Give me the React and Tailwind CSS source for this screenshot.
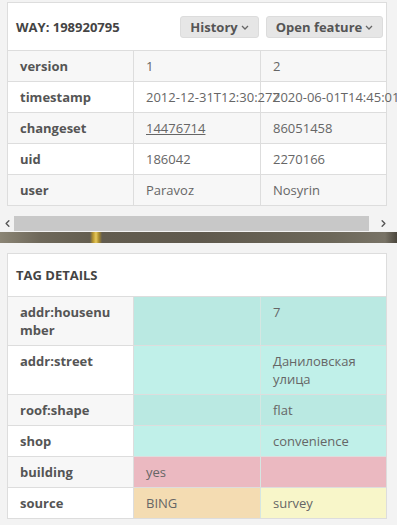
import { ChevronLeft, ChevronRight } from "lucide-react";

const history = [
  { key: "version", a: "1", b: "2" },
  { key: "timestamp", a: "2012-12-31T12:30:27Z", b: "2020-06-01T14:45:01Z" },
  { key: "changeset", a: "14476714", b: "86051458", link: true },
  { key: "uid", a: "186042", b: "2270166" },
  { key: "user", a: "Paravoz", b: "Nosyrin" },
];

const tags = [
  { key: "addr:housenumber", a: "", b: "7", ca: "bg-[#bae9e2]", cb: "bg-[#bae9e2]" },
  { key: "addr:street", a: "", b: "Даниловская улица", ca: "bg-[#c0f0e9]", cb: "bg-[#c0f0e9]" },
  { key: "roof:shape", a: "", b: "flat", ca: "bg-[#bae9e2]", cb: "bg-[#bae9e2]" },
  { key: "shop", a: "", b: "convenience", ca: "bg-[#c0f0e9]", cb: "bg-[#c0f0e9]" },
  { key: "building", a: "yes", b: "", ca: "bg-[#ebb9c1]", cb: "bg-[#ebb9c1]" },
  { key: "source", a: "BING", b: "survey", ca: "bg-[#f4dcb2]", cb: "bg-[#f8f6c9]" },
];

function Caret() {
  return (
    <svg width="8" height="5" viewBox="0 0 8 5" className="ml-[3px] mt-[2px]">
      <polyline points="1,1 4,4 7,1" fill="none" stroke="#666" strokeWidth="1.3" />
    </svg>
  );
}

function DropButton({ label, width }) {
  return (
    <div
      className={`${width} h-[22px] flex items-center justify-center rounded-[3px] bg-[#e6e6e6] border border-[#dcdcdc] text-[13px] font-bold text-[#555]`}
    >
      {label}
      <Caret />
    </div>
  );
}

export default function App() {
  return (
    <div className="w-[397px] h-[525px] overflow-hidden bg-[#f3f3f3] font-['Open_Sans',sans-serif] text-[13px] leading-[18px]">
      {/* feature history, scrolls sideways */}
      <div className="h-[216px] pt-[2px] pl-[7px] overflow-hidden">
        <div className="w-[380px] border border-[#ddd] bg-white">
          <div className="h-[47px] flex items-center pl-[8px] pr-[3px]">
            <span className="font-bold text-[#444]">WAY: 198920795</span>
            <div className="ml-auto flex gap-[7px]">
              <DropButton label="History" width="w-[79px]" />
              <DropButton label="Open feature" width="w-[117px]" />
            </div>
          </div>
          {history.map((r, i) => (
            <div
              key={r.key}
              className={`flex h-[31px] border-t border-[#ddd] ${i % 2 === 0 ? "bg-[#f7f7f7]" : "bg-white"}`}
            >
              <div className="w-[126px] shrink-0 pl-[12px] pt-[6px] font-bold text-[#555] border-r border-[#ddd]">
                {r.key}
              </div>
              <div className="w-[127px] shrink-0 pl-[12px] pt-[6px] text-[#666] whitespace-nowrap border-r border-[#ddd]">
                <span className={r.link ? "underline" : ""}>{r.a}</span>
              </div>
              <div className="w-[125px] shrink-0 pl-[12px] pt-[6px] text-[#666] whitespace-nowrap">{r.b}</div>
            </div>
          ))}
        </div>
      </div>

      {/* horizontal scrollbar */}
      <div className="h-[16px] flex items-start">
        <div className="w-[14px] h-[15px] flex items-center justify-center">
          <ChevronLeft size={11} strokeWidth={3} color="#555" />
        </div>
        <div className="w-[355px] h-[15px] bg-[#c8c8c8]" />
        <div className="flex-1 h-[15px] flex items-center justify-center">
          <ChevronRight size={11} strokeWidth={3} color="#555" />
        </div>
      </div>

      {/* map strip */}
      <div className="h-[11px] bg-[linear-gradient(90deg,#8b8575_0px,#6e685a_40px,#645e50_90px,#b8962e_93px,#e6c85a_96px,#a88a2c_99px,#625c4f_102px,#5f594d_200px,#6c6759_330px,#787366_385px,#4b463c_397px)]" />

      {/* tag details */}
      <div className="pt-[10px] pl-[7px]">
        <div className="w-[380px] border border-[#ddd] bg-white">
          <div className="h-[42px] flex items-center pl-[8px] font-bold text-[#444]">TAG DETAILS</div>
          {tags.map((r, i) => (
            <div key={r.key} className="flex border-t border-[#ddd]">
              <div
                className={`w-[126px] shrink-0 pl-[12px] pr-[12px] py-[6px] font-bold text-[#555] break-all border-r border-[#ddd] ${i % 2 === 0 ? "bg-[#f7f7f7]" : "bg-white"}`}
              >
                {r.key}
              </div>
              <div className={`w-[127px] shrink-0 pl-[12px] py-[6px] text-[#666] border-r border-[#d5e6e2] ${r.ca}`}>
                {r.a}
              </div>
              <div className={`w-[125px] shrink-0 pl-[12px] pr-[20px] py-[6px] text-[#666] ${r.cb}`}>{r.b}</div>
            </div>
          ))}
        </div>
      </div>
    </div>
  );
}
